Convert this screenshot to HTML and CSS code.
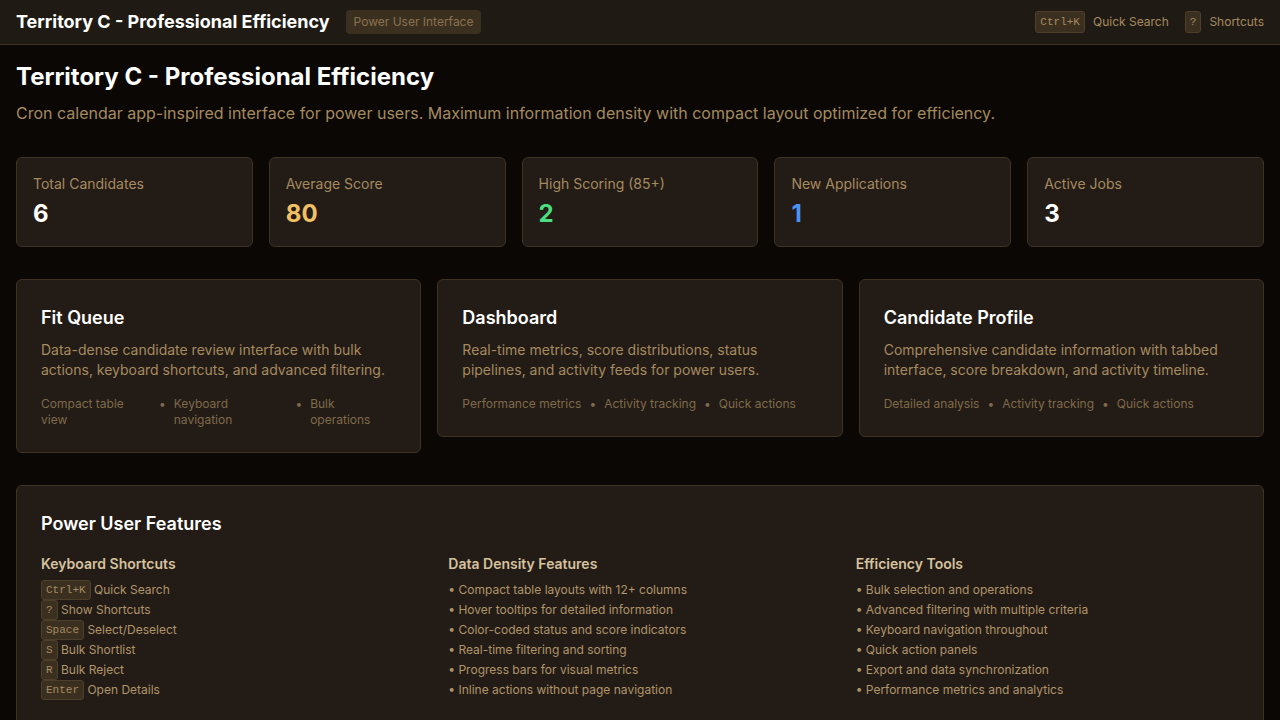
FILE: index.html
```html
<!DOCTYPE html>
<html lang="en">
<head>
<meta charset="utf-8">
<title>Territory C - Professional Efficiency</title>
<link rel="stylesheet" href="styles.css">
</head>
<body>
<header class="topbar">
  <div class="topbar-left">
    <span class="brand">Territory C - Professional Efficiency</span>
    <span class="badge">Power User Interface</span>
  </div>
  <div class="topbar-right">
    <span class="hint"><kbd class="kbd-lg">Ctrl+K</kbd><span>Quick Search</span></span>
    <span class="hint"><kbd class="kbd-lg">?</kbd><span>Shortcuts</span></span>
  </div>
</header>
<main class="main">
  <h1 class="page-title">Territory C - Professional Efficiency</h1>
  <p class="page-sub">Cron calendar app-inspired interface for power users. Maximum information density with compact layout optimized for efficiency.</p>

  <section class="stats">
    <div class="stat"><div class="stat-label">Total Candidates</div><div class="stat-value v-white">6</div></div>
    <div class="stat"><div class="stat-label">Average Score</div><div class="stat-value v-amber">80</div></div>
    <div class="stat"><div class="stat-label">High Scoring (85+)</div><div class="stat-value v-green">2</div></div>
    <div class="stat"><div class="stat-label">New Applications</div><div class="stat-value v-blue">1</div></div>
    <div class="stat"><div class="stat-label">Active Jobs</div><div class="stat-value v-white">3</div></div>
  </section>

  <section class="cards">
    <div class="card">
      <h2 class="card-title">Fit Queue</h2>
      <p class="card-desc">Data-dense candidate review interface with bulk actions, keyboard shortcuts, and advanced filtering.</p>
      <div class="tags"><span>Compact table view</span><span>•</span><span>Keyboard navigation</span><span>•</span><span>Bulk operations</span></div>
    </div>
    <div class="card">
      <h2 class="card-title">Dashboard</h2>
      <p class="card-desc">Real-time metrics, score distributions, status pipelines, and activity feeds for power users.</p>
      <div class="tags"><span>Performance metrics</span><span>•</span><span>Activity tracking</span><span>•</span><span>Quick actions</span></div>
    </div>
    <div class="card">
      <h2 class="card-title">Candidate Profile</h2>
      <p class="card-desc">Comprehensive candidate information with tabbed interface, score breakdown, and activity timeline.</p>
      <div class="tags"><span>Detailed analysis</span><span>•</span><span>Activity tracking</span><span>•</span><span>Quick actions</span></div>
    </div>
  </section>

  <section class="features">
    <h2 class="card-title features-title">Power User Features</h2>
    <div class="feature-cols">
      <div class="fcol">
        <h3 class="fcol-title">Keyboard Shortcuts</h3>
        <ul class="flist">
          <li><kbd>Ctrl+K</kbd> Quick Search</li>
          <li><kbd>?</kbd> Show Shortcuts</li>
          <li><kbd>Space</kbd> Select/Deselect</li>
          <li><kbd>S</kbd> Bulk Shortlist</li>
          <li><kbd>R</kbd> Bulk Reject</li>
          <li><kbd>Enter</kbd> Open Details</li>
        </ul>
      </div>
      <div class="fcol">
        <h3 class="fcol-title">Data Density Features</h3>
        <ul class="flist">
          <li>• Compact table layouts with 12+ columns</li>
          <li>• Hover tooltips for detailed information</li>
          <li>• Color-coded status and score indicators</li>
          <li>• Real-time filtering and sorting</li>
          <li>• Progress bars for visual metrics</li>
          <li>• Inline actions without page navigation</li>
        </ul>
      </div>
      <div class="fcol">
        <h3 class="fcol-title">Efficiency Tools</h3>
        <ul class="flist">
          <li>• Bulk selection and operations</li>
          <li>• Advanced filtering with multiple criteria</li>
          <li>• Keyboard navigation throughout</li>
          <li>• Quick action panels</li>
          <li>• Export and data synchronization</li>
          <li>• Performance metrics and analytics</li>
        </ul>
      </div>
    </div>
  </section>
</main>
</body>
</html>
```
FILE: styles.css
```css
* { box-sizing: border-box; }
html, body { margin: 0; padding: 0; }
body {
  background: #0a0705;
  color: #a58a60;
  font-family: Inter, "Noto Sans", sans-serif;
  font-size: 14px;
  line-height: 20px;
}
h1, h2, h3, p, ul { margin: 0; padding: 0; }

.topbar {
  height: 45px;
  background: #201a14;
  border-bottom: 1px solid #3e3222;
  display: flex;
  align-items: center;
  justify-content: space-between;
  padding: 0 16px;
}
.topbar-left { display: flex; align-items: center; gap: 16px; }
.brand { color: #ffffff; font-size: 18px; font-weight: 700; line-height: 28px; }
.badge {
  background: #3b3020;
  color: #8a7250;
  font-size: 12px;
  line-height: 16px;
  padding: 4px 8px;
  border-radius: 4px;
}
.topbar-right { display: flex; align-items: center; gap: 16px; }
.hint { display: flex; align-items: center; gap: 8px; font-size: 12px; color: #a58a60; }

kbd {
  font-family: "Liberation Mono", "DejaVu Sans Mono", monospace;
  background: #3b3020;
  border: 1px solid #4d3f2a;
  color: #a58a60;
  border-radius: 3px;
}
.kbd-lg {
  font-size: 11px;
  line-height: 16px;
  padding: 2px 4px;
  display: inline-block;
}

.main { padding: 16px; }
.page-title { color: #ffffff; font-size: 24px; font-weight: 700; line-height: 32px; margin-bottom: 8px; }
.page-sub { font-size: 16px; line-height: 24px; color: #a58a60; margin-bottom: 32px; }

.stats {
  display: grid;
  grid-template-columns: repeat(5, 1fr);
  gap: 16px;
  margin-bottom: 32px;
}
.stat {
  background: #231c16;
  border: 1px solid #3e3222;
  border-radius: 6px;
  padding: 16px;
}
.stat-label { font-size: 14px; line-height: 20px; color: #a58a60; margin-bottom: 4px; }
.stat-value { font-size: 24px; font-weight: 700; line-height: 32px; }
.v-white { color: #ffffff; }
.v-amber { color: #f2c062; }
.v-green { color: #4ade80; }
.v-blue { color: #4a93f5; }

.cards {
  display: grid;
  grid-template-columns: repeat(3, 1fr);
  gap: 16px;
  align-items: start;
  margin-bottom: 32px;
}
.card {
  background: #231c16;
  border: 1px solid #3e3222;
  border-radius: 6px;
  padding: 24px;
}
.card-title { color: #ffffff; font-size: 18px; font-weight: 600; line-height: 28px; margin-bottom: 8px; }
.card-desc { font-size: 14px; line-height: 20px; color: #a58a60; margin-bottom: 16px; }
.tags { display: flex; gap: 8px; font-size: 12px; line-height: 16px; color: #7f6a4a; }

.features {
  background: #231c16;
  border: 1px solid #3e3222;
  border-radius: 6px;
  padding: 24px;
}
.features-title { margin-bottom: 16px; }
.feature-cols { display: grid; grid-template-columns: repeat(3, 1fr); gap: 24px; }
.fcol-title { color: #d6c29e; font-size: 14px; font-weight: 600; line-height: 20px; margin-bottom: 6px; }
.flist { list-style: none; font-size: 12px; line-height: 20px; color: #b0946a; }
.flist li { height: 20px; }
.flist kbd {
  font-size: 11px;
  line-height: 16px;
  padding: 1px 4px;
  display: inline-block;
  vertical-align: top;
}
```
